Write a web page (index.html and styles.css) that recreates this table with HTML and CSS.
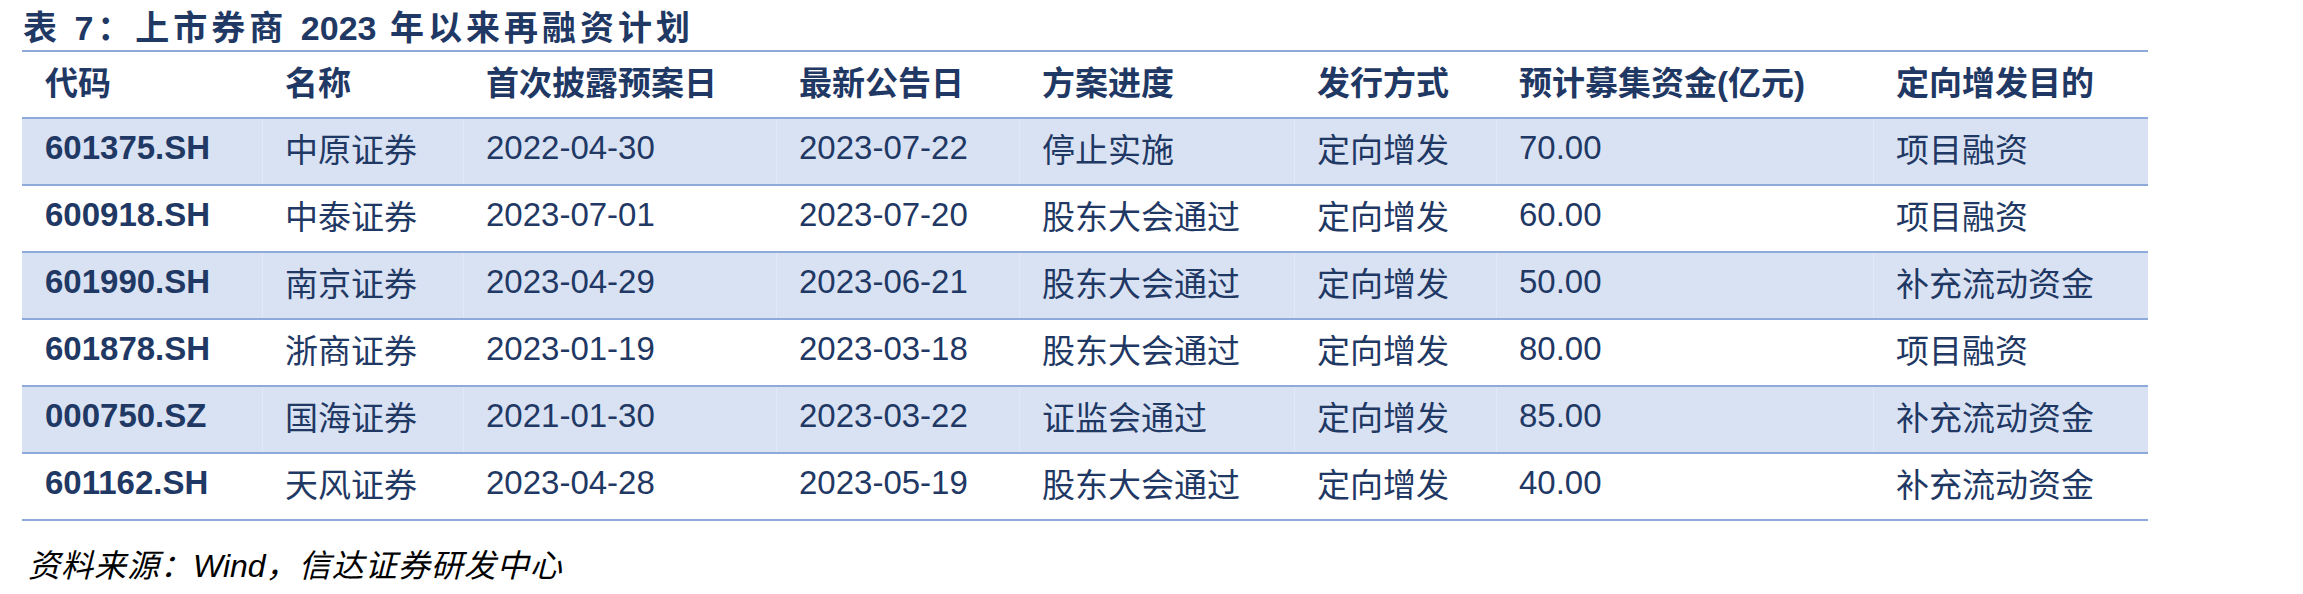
FILE: index.html
```html
<!DOCTYPE html>
<html lang="zh-CN">
<head>
<meta charset="utf-8">
<title>上市券商2023年以来再融资计划</title>
<link rel="stylesheet" href="styles.css">
</head>
<body>
<div class="page">
  <h1 class="title">表 7：上市券商 <span class="num">2023</span> 年以来再融资计划</h1>
  <div class="table">
    <div class="row head">
      <div class="cell">代码</div>
      <div class="cell">名称</div>
      <div class="cell">首次披露预案日</div>
      <div class="cell">最新公告日</div>
      <div class="cell">方案进度</div>
      <div class="cell">发行方式</div>
      <div class="cell">预计募集资金(亿元)</div>
      <div class="cell">定向增发目的</div>
    </div>
    <div class="row shade">
      <div class="cell code">601375.SH</div>
      <div class="cell">中原证券</div>
      <div class="cell">2022-04-30</div>
      <div class="cell">2023-07-22</div>
      <div class="cell">停止实施</div>
      <div class="cell">定向增发</div>
      <div class="cell">70.00</div>
      <div class="cell">项目融资</div>
    </div>
    <div class="row">
      <div class="cell code">600918.SH</div>
      <div class="cell">中泰证券</div>
      <div class="cell">2023-07-01</div>
      <div class="cell">2023-07-20</div>
      <div class="cell">股东大会通过</div>
      <div class="cell">定向增发</div>
      <div class="cell">60.00</div>
      <div class="cell">项目融资</div>
    </div>
    <div class="row shade">
      <div class="cell code">601990.SH</div>
      <div class="cell">南京证券</div>
      <div class="cell">2023-04-29</div>
      <div class="cell">2023-06-21</div>
      <div class="cell">股东大会通过</div>
      <div class="cell">定向增发</div>
      <div class="cell">50.00</div>
      <div class="cell">补充流动资金</div>
    </div>
    <div class="row">
      <div class="cell code">601878.SH</div>
      <div class="cell">浙商证券</div>
      <div class="cell">2023-01-19</div>
      <div class="cell">2023-03-18</div>
      <div class="cell">股东大会通过</div>
      <div class="cell">定向增发</div>
      <div class="cell">80.00</div>
      <div class="cell">项目融资</div>
    </div>
    <div class="row shade">
      <div class="cell code">000750.SZ</div>
      <div class="cell">国海证券</div>
      <div class="cell">2021-01-30</div>
      <div class="cell">2023-03-22</div>
      <div class="cell">证监会通过</div>
      <div class="cell">定向增发</div>
      <div class="cell">85.00</div>
      <div class="cell">补充流动资金</div>
    </div>
    <div class="row">
      <div class="cell code">601162.SH</div>
      <div class="cell">天风证券</div>
      <div class="cell">2023-04-28</div>
      <div class="cell">2023-05-19</div>
      <div class="cell">股东大会通过</div>
      <div class="cell">定向增发</div>
      <div class="cell">40.00</div>
      <div class="cell">补充流动资金</div>
    </div>
  </div>
  <p class="source">资料来源：<span class="latin">Wind</span>，信达证券研发中心</p>
</div>
</body>
</html>
```

FILE: styles.css
```css
html, body {
  margin: 0;
  padding: 0;
  background: #ffffff;
}

.page {
  padding: 8px 0 0 22px;
  font-family: "Liberation Sans", "Noto Sans CJK SC", sans-serif;
  color: #1f3864;
}

.title {
  margin: 0 0 2px 1px;
  font-size: 34px;
  line-height: 40px;
  font-weight: 700;
  letter-spacing: 4px;
  white-space: nowrap;
}

.title .num {
  letter-spacing: 0;
}

.table {
  width: 2126px;
  border-top: 2px solid #8eaadb;
}

.row {
  display: grid;
  grid-template-columns: 240px 201px 313px 243px 275px 202px 377px 275px;
  height: 65px;
  border-bottom: 2px solid #8eaadb;
}

.row.shade {
  background: #d9e2f3;
}

.cell {
  display: flex;
  align-items: center;
  padding: 0 0 8px 23px;
  font-size: 33px;
  white-space: nowrap;
}

.cell + .cell {
  border-left: 1px solid rgba(255, 255, 255, 0.25);
  padding-left: 22px;
}

.head .cell {
  font-weight: 700;
}

.cell.code {
  font-weight: 700;
}

.source {
  margin: 25px 0 0 6px;
  font-size: 32px;
  line-height: 40px;
  font-style: italic;
  letter-spacing: 1px;
  color: #000000;
}

.source .latin {
  letter-spacing: 0;
}
```
